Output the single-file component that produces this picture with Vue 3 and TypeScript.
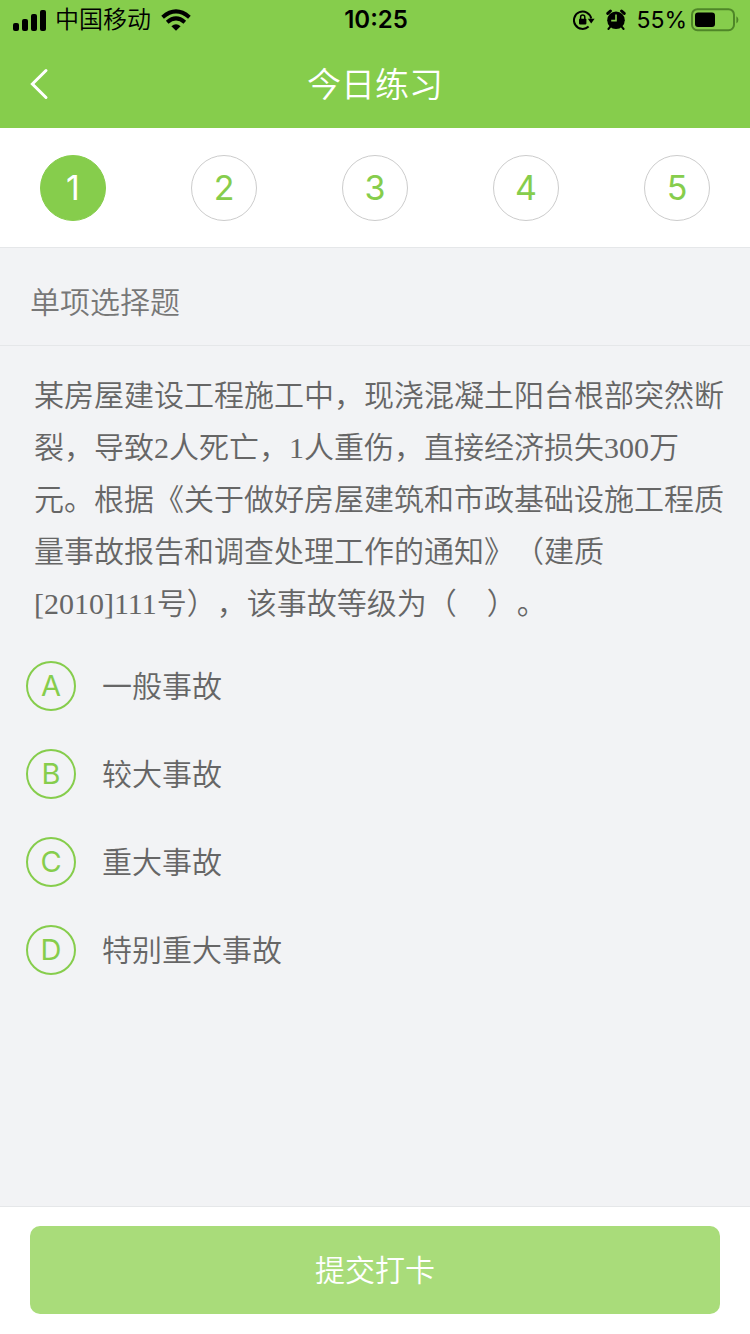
<script setup lang="ts">
import { ref } from 'vue'

interface Option {
  key: string
  text: string
}

const total = 5
const current = ref(1)
const answer = ref('')

const question =
  '某房屋建设工程施工中，现浇混凝土阳台根部突然断裂，导致2人死亡，1人重伤，直接经济损失300万元。根据《关于做好房屋建筑和市政基础设施工程质量事故报告和调查处理工作的通知》（建质[2010]111号），该事故等级为（\u3000）。'

const options: Option[] = [
  { key: 'A', text: '一般事故' },
  { key: 'B', text: '较大事故' },
  { key: 'C', text: '重大事故' },
  { key: 'D', text: '特别重大事故' },
]
</script>

<template>
  <div class="page">
    <header class="header">
      <div class="status">
        <div class="status-side">
          <svg class="signal" viewBox="0 0 34 22" aria-hidden="true">
            <rect x="0" y="14" width="6" height="8" rx="2" />
            <rect x="9" y="10" width="6" height="12" rx="2" />
            <rect x="18" y="5" width="6" height="17" rx="2" />
            <rect x="27" y="1" width="6" height="21" rx="2" />
          </svg>
          <span class="carrier">中国移动</span>
          <svg class="wifi" viewBox="0 0 30 22" aria-hidden="true">
            <path d="M1.6 8.2Q15-3.4 28.4 8.2" />
            <path d="M6.2 13.2Q15 5.6 23.8 13.2" />
            <path class="solid" d="M10.4 17.2Q15 13.4 19.6 17.2L15 21.8Z" />
          </svg>
        </div>
        <time class="clock">10:25</time>
        <div class="status-side status-right">
          <svg class="lock" viewBox="0 0 22 20" aria-hidden="true">
            <path d="M15.6 16.6A8.7 8.7 0 1 1 18.2 8.5" />
            <path class="solid" d="M14.8 8.8H21.6L18.2 13.6Z" />
            <rect class="solid" x="6" y="8.8" width="7.4" height="5.6" rx="0.8" />
            <path class="shackle" d="M7.6 9.5V7.2a2.1 2.1 0 0 1 4.2 0V9.5" />
          </svg>
          <svg class="alarm" viewBox="0 0 20 22" aria-hidden="true">
            <circle class="solid" cx="10" cy="11.2" r="8.8" />
            <path class="bell" d="M1.8 4.4L4.4 2M18.2 4.4L15.6 2" />
            <path class="foot" d="M4.4 17.6L2.4 20M15.6 17.6L17.6 20" />
            <path class="hands" d="M10 5.4V11.6H5.2" />
          </svg>
          <span class="percent">55%</span>
          <svg class="battery" viewBox="0 0 48 24" aria-hidden="true">
            <rect class="shell" x="1" y="1.2" width="42" height="21" rx="5.5" />
            <rect class="solid" x="4" y="4.4" width="20" height="14.6" rx="3" />
            <path class="tip" d="M45.4 8.2q2 1 2 3.6t-2 3.6z" />
          </svg>
        </div>
      </div>
      <nav class="nav">
        <button class="back" type="button" aria-label="返回">
          <svg viewBox="0 0 20 32" aria-hidden="true"><path d="M17 2.5L3.4 16L17 29.5" /></svg>
        </button>
        <h1 class="title">今日练习</h1>
      </nav>
    </header>

    <div class="steps">
      <button
        v-for="n in total"
        :key="n"
        type="button"
        class="step"
        :class="{ active: n === current }"
        @click="current = n"
      >{{ n }}</button>
    </div>

    <h2 class="kind">单项选择题</h2>

    <main class="main">
      <p class="question">{{ question }}</p>
      <div class="options" role="radiogroup" aria-label="选项">
        <label v-for="o in options" :key="o.key" class="option">
          <span class="mark">
            <input v-model="answer" class="radio" type="radio" name="answer" :value="o.key" />
            <span class="letter">{{ o.key }}</span>
          </span>
          <span>{{ o.text }}</span>
        </label>
      </div>
    </main>

    <footer class="footer">
      <button class="submit" type="button">提交打卡</button>
    </footer>
  </div>
</template>

<style>
body {
  margin: 0;
}
</style>

<style scoped>
.page {
  --green: #86cd4c;
  --line: #e5e7e9;
  display: flex;
  flex-direction: column;
  min-height: 100vh;
  background: #f2f3f5;
  color: #666;
  font-family: Inter, "Noto Sans CJK SC", sans-serif;
  font-size: 30px;
  font-weight: 350;
  line-height: 44px;
  text-spacing-trim: space-all;
}

button {
  margin: 0;
  padding: 0;
  border: 0;
  background: none;
  font: inherit;
  cursor: pointer;
}

.header {
  background: var(--green);
}

.status {
  display: grid;
  grid-template-columns: 1fr auto 1fr;
  align-items: center;
  height: 40px;
  padding: 0 11px 0 13px;
  color: #000;
  font-size: 24px;
  line-height: 40px;
}

.status-side {
  display: flex;
  align-items: center;
}

.status-right {
  justify-content: flex-end;
}

.signal {
  width: 34px;
  height: 22px;
  margin-right: 8px;
}

.wifi {
  width: 30px;
  height: 22px;
  margin-left: 10px;
}

.wifi path {
  fill: none;
  stroke: #000;
  stroke-width: 4;
}

.clock {
  font-size: 24px;
  font-weight: 600;
}

.lock {
  width: 22px;
  height: 20px;
  margin-right: 11px;
}

.lock path {
  fill: none;
  stroke: #000;
  stroke-width: 2;
}

.lock .shackle {
  stroke-width: 1.5;
}

.alarm {
  width: 20px;
  height: 22px;
  margin-right: 10px;
}

.alarm .bell,
.alarm .foot {
  fill: none;
  stroke: #000;
  stroke-width: 3;
  stroke-linecap: round;
}

.alarm .foot {
  stroke-width: 2;
}

.alarm .hands {
  fill: none;
  stroke: var(--green);
  stroke-width: 1.6;
}

.status svg .solid {
  fill: #000;
  stroke: none;
}

.percent {
  font-size: 23px;
  font-weight: 400;
}

.battery {
  width: 48px;
  height: 24px;
  margin-left: 4px;
}

.battery .shell {
  fill: none;
  stroke: #4f8628;
  stroke-width: 2;
}

.battery .tip {
  fill: #4f8628;
}

.nav {
  display: grid;
  grid-template-columns: 78px 1fr 78px;
  align-items: center;
  height: 88px;
}

.back {
  display: flex;
  align-items: center;
  height: 88px;
  padding-left: 29px;
}

.back svg {
  width: 20px;
  height: 32px;
}

.back path {
  fill: none;
  stroke: #fff;
  stroke-width: 3;
  stroke-linecap: round;
}

.title {
  margin: 0;
  padding-top: 2px;
  color: #fff;
  font-size: 34px;
  font-weight: 350;
  text-align: center;
}

.steps {
  display: flex;
  justify-content: space-between;
  padding: 27px 40px 26px;
  border-bottom: 1px solid var(--line);
  background: #fff;
}

.step {
  width: 66px;
  height: 66px;
  border: 1px solid #ccc;
  border-radius: 50%;
  color: var(--green);
  font-size: 34px;
  font-weight: 400;
}

.step.active {
  border-color: var(--green);
  background: var(--green);
  color: #fff;
}

.kind {
  margin: 0;
  padding: 32px 30px 21px;
  border-bottom: 1px solid var(--line);
  color: #777;
  font-size: 30px;
  font-weight: 350;
}

.main {
  flex: 1;
  padding: 24px 26px;
}

.question {
  margin: 0 0 12px 8px;
  font-family: "Liberation Serif", "Noto Sans CJK SC", serif;
  line-height: 52px;
}

.option {
  display: flex;
  align-items: center;
  gap: 26px;
  height: 88px;
  cursor: pointer;
}

.mark {
  display: grid;
  place-items: center;
  width: 50px;
  height: 50px;
  color: var(--green);
}

.radio,
.letter {
  grid-area: 1 / 1;
}

.radio {
  appearance: none;
  width: 50px;
  height: 50px;
  margin: 0;
  border: 2px solid var(--green);
  border-radius: 50%;
}

.radio:checked {
  background: var(--green);
}

.radio:checked + .letter {
  color: #fff;
}

.letter {
  font-size: 29px;
  font-weight: 400;
  pointer-events: none;
}

.footer {
  padding: 19px 30px 20px;
  border-top: 1px solid var(--line);
  background: #fff;
}

.submit {
  display: block;
  width: 100%;
  height: 88px;
  border-radius: 10px;
  background: #a9dc7a;
  color: #fff;
}
</style>
